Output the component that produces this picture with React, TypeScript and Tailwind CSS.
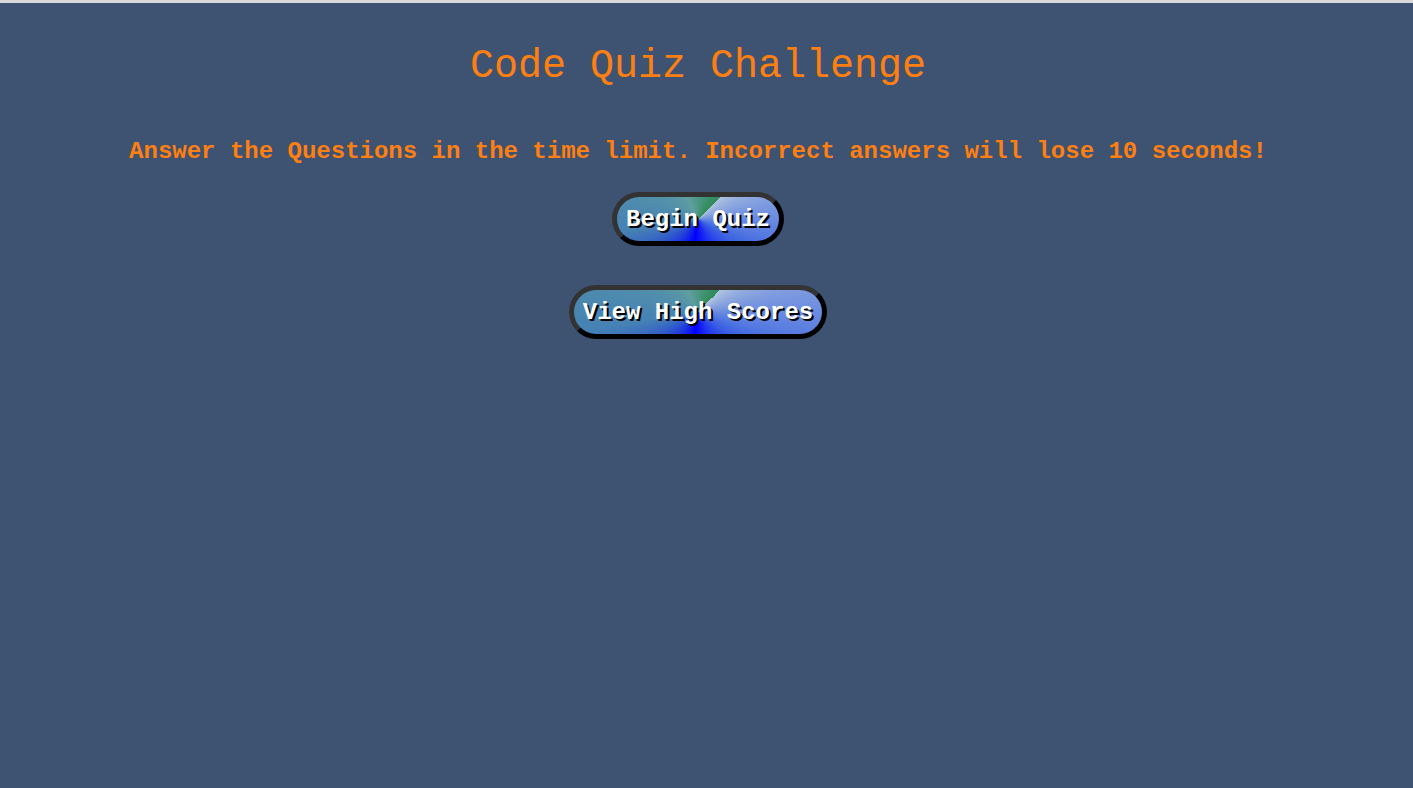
import React from "react";

const btn =
  "rounded-full border-[5px] border-t-[#333333] border-l-[#333333] border-b-black border-r-black bg-[image:conic-gradient(from_45deg,lightsteelblue,royalblue,blue,steelblue,cadetblue,seagreen)] text-white font-bold text-[24px] leading-[27px] px-[9px] py-[8.5px] [text-shadow:2px_2px_0_#000] [font-family:'Liberation_Mono',monospace]";

export default function App() {
  return (
    <div className="min-h-[788px] w-full bg-[#3d5371] [font-family:'Liberation_Mono',monospace]">
      <div className="h-[3px] bg-[#dadada]" />
      <div className="w-[1396px] flex flex-col items-center">
        <h1 className="mt-[41px] text-[40px] leading-[45px] text-[#ff7f11] font-normal">
          Code Quiz Challenge
        </h1>
        <p className="mt-[49px] text-[24px] leading-[27px] font-bold text-[#ff7f11]">
          Answer the Questions in the time limit. Incorrect answers will lose 10 seconds!
        </p>
        <button className={"mt-[27px] " + btn}>Begin Quiz</button>
        <button className={"mt-[39px] " + btn}>View High Scores</button>
      </div>
    </div>
  );
}
